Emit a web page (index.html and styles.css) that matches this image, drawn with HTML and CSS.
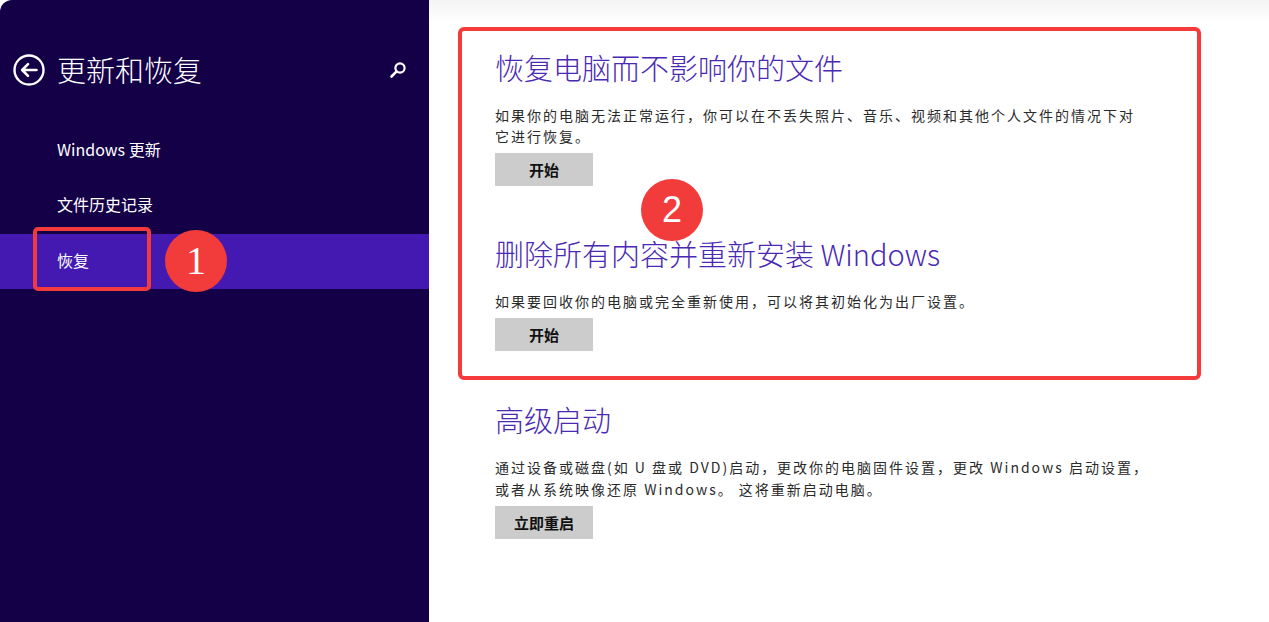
FILE: index.html
```html
<!DOCTYPE html>
<html lang="zh-CN">
<head>
  <meta charset="UTF-8" />
  <meta name="viewport" content="width=device-width, initial-scale=1" />
  <title>更新和恢复</title>
  <link rel="stylesheet" href="styles.css">
</head>
<body>

  <!-- Panel izquierdo -->
  <aside class="sidebar">
    <div class="sidebar-header">
      <svg class="back-icon" width="32" height="32" viewBox="0 0 32 32">
        <circle cx="16" cy="16" r="14.5" fill="none" stroke="#fff" stroke-width="2.4"/>
        <path d="M23.5 16H9.5M15 10.2L9.2 16l5.8 5.8" fill="none" stroke="#fff" stroke-width="2.6" stroke-linecap="round" stroke-linejoin="round"/>
      </svg>
      <h1>更新和恢复</h1>
      <svg class="search-icon" width="18" height="18" viewBox="0 0 18 18">
        <circle cx="11" cy="7" r="4.6" fill="none" stroke="#fff" stroke-width="2.2"/>
        <path d="M7.6 10.4L2.5 15.5" stroke="#fff" stroke-width="2.6" stroke-linecap="round"/>
      </svg>
    </div>

    <nav class="nav">
      <div class="nav-item">Windows 更新</div>
      <div class="nav-item">文件历史记录</div>
      <div class="nav-item active">
        恢复
        <span class="mark mark-nav"></span>
        <span class="badge badge-serif badge-1">1</span>
      </div>
    </nav>
  </aside>

  <!-- Contenido -->
  <main class="content">
    <div class="highlight">
      <section class="option">
        <h2>恢复电脑而不影响你的文件</h2>
        <p>如果你的电脑无法正常运行，你可以在不丢失照片、音乐、视频和其他个人文件的情况下对<br>它进行恢复。</p>
        <button>开始</button>
      </section>

      <section class="option option-gap">
        <h2>删除所有内容并重新安装 Windows</h2>
        <p>如果要回收你的电脑或完全重新使用，可以将其初始化为出厂设置。</p>
        <button>开始</button>
      </section>

      <span class="badge badge-2">2</span>
    </div>

    <section class="option option-plain">
      <h2>高级启动</h2>
      <p>通过设备或磁盘(如 U 盘或 DVD)启动，更改你的电脑固件设置，更改 Windows 启动设置，<br>或者从系统映像还原 Windows。 这将重新启动电脑。</p>
      <button>立即重启</button>
    </section>
  </main>

</body>
</html>
```

FILE: styles.css
```css
body {
  margin: 0;
  display: flex;
  height: 622px;
  overflow: hidden;
  background-color: #fff;
  font-family: "Noto Sans CJK SC", "Noto Sans", sans-serif;
}

/* Panel izquierdo */
.sidebar {
  width: 429px;
  flex-shrink: 0;
  background-color: #130047;
  border-top-left-radius: 12px;
  color: #fff;
  padding-top: 54px;
  box-sizing: border-box;
}

.sidebar-header {
  display: flex;
  align-items: center;
  height: 32px;
  padding-left: 13px;
  padding-right: 22px;
}

.back-icon {
  flex-shrink: 0;
}

.sidebar-header h1 {
  flex: 1;
  margin: -2px 0 0 12px;
  font-size: 29px;
  font-weight: 300;
  line-height: 32px;
}

.nav {
  margin-top: 37px;
}

.nav-item {
  position: relative;
  height: 55px;
  line-height: 53px;
  padding-left: 57px;
  font-size: 16px;
}

.nav-item.active {
  background-color: #4319b2;
  margin-top: 1px;
}

/* Marcas rojas */
.mark {
  position: absolute;
  border: 4px solid #f33b3b;
  border-radius: 5px;
  box-sizing: border-box;
}

.mark-nav {
  left: 33px;
  top: -7px;
  width: 118px;
  height: 64px;
}

.badge {
  position: absolute;
  width: 62px;
  height: 62px;
  border-radius: 50%;
  background-color: #f23b3b;
  color: #fff;
  text-align: center;
  line-height: 62px;
  font-size: 36px;
}

.badge-serif {
  font-family: "Liberation Serif", serif;
  font-size: 40px;
}

.badge-1 {
  left: 165px;
  top: -4px;
}

.badge-2 {
  left: 179px;
  top: 148px;
  font-family: "Liberation Sans", sans-serif;
}

/* Contenido */
.content {
  flex: 1;
  padding-top: 27px;
  padding-left: 29px;
  background: linear-gradient(to bottom, #f3f3f3, #fff 22px);
}

.highlight {
  position: relative;
  width: 743px;
  height: 353px;
  box-sizing: border-box;
  border: 4px solid #f33b3b;
  border-radius: 6px;
  padding: 16px 0 0 33px;
}

.option h2 {
  margin: 0;
  font-size: 29px;
  font-weight: 300;
  line-height: 40px;
  color: #4a2ab2;
}

.option p {
  margin: 18px 0 6px;
  font-size: 14px;
  letter-spacing: 2px;
  line-height: 21px;
  color: #2a2a2a;
}

.option-gap {
  margin-top: 47px;
}

.option-plain {
  margin-top: 19px;
  padding-left: 37px;
}

.option-plain p {
  margin-top: 17px;
  line-height: 22px;
  margin-bottom: 6px;
}

button {
  width: 98px;
  height: 33px;
  border: none;
  background-color: #cccccc;
  font-family: "Noto Sans CJK SC", sans-serif;
  font-size: 15px;
  font-weight: bold;
  color: #111;
  padding: 0;
  cursor: pointer;
}
```
